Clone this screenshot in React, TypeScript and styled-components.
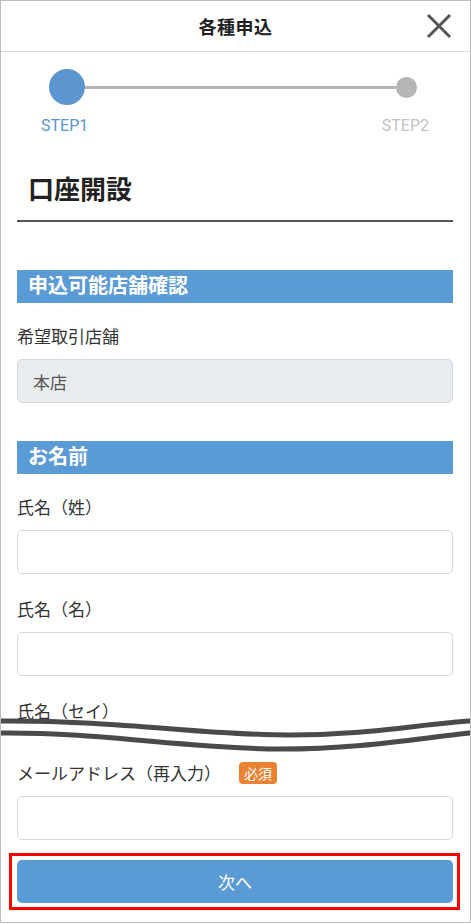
import React from 'react';
import styled, { createGlobalStyle } from 'styled-components';

const GlobalStyle = createGlobalStyle`
  html, body {
    margin: 0;
    padding: 0;
    background: #fff;
  }
  body {
    font-family: Roboto, "Noto Sans CJK JP", sans-serif;
    color: #333;
  }
  * {
    box-sizing: border-box;
  }
`;

const Frame = styled.div`
  width: 471px;
  height: 923px;
  border: 1px solid #bcbcbc;
  overflow: hidden;
  background: #fff;
`;

const Header = styled.header`
  display: grid;
  grid-template-columns: 1fr auto 1fr;
  align-items: center;
  height: 51px;
  border-bottom: 1px solid #dcdcdc;
`;

const HeaderTitle = styled.h1`
  grid-column: 2;
  margin: 0;
  font-size: 18px;
  font-weight: 700;
  color: #222;
  letter-spacing: 0.5px;
`;

const CloseButton = styled.button`
  justify-self: end;
  display: flex;
  align-items: center;
  justify-content: center;
  width: 28px;
  height: 28px;
  margin-right: 17px;
  padding: 0;
  border: 0;
  background: none;
  cursor: pointer;
`;

const Stepper = styled.div`
  padding-top: 17px;
`;

const StepTrack = styled.div`
  display: flex;
  align-items: center;
  padding: 0 53px 0 48px;
`;

const Dot = styled.span<{ $active?: boolean }>`
  flex: none;
  width: ${(p) => (p.$active ? 36 : 21)}px;
  height: ${(p) => (p.$active ? 36 : 21)}px;
  border-radius: 50%;
  background: ${(p) => (p.$active ? '#5b96d0' : '#b5b5b5')};
`;

const StepLine = styled.span`
  flex: 1;
  height: 3px;
  background: #b5b5b5;
`;

const StepLabels = styled.div`
  display: flex;
  justify-content: space-between;
  padding: 0 41px 0 40px;
  margin-top: 11px;
`;

const StepLabel = styled.span<{ $active?: boolean }>`
  font-family: Roboto, "Noto Sans CJK JP", sans-serif;
  font-size: 16px;
  font-weight: 400;
  line-height: 20px;
  color: ${(p) => (p.$active ? '#5b96d0' : '#c2c2c2')};
`;

const Content = styled.main`
  padding: 0 17px 0 16px;
`;

const PageTitle = styled.h2`
  margin: 36px 0 0;
  padding: 0 11px 12px;
  font-size: 26px;
  font-weight: 700;
  line-height: 36px;
  color: #222;
  border-bottom: 2px solid #555;
`;

const Section = styled.section<{ $first?: boolean }>`
  margin-top: ${(p) => (p.$first ? 48 : 38)}px;
`;

const SectionHeading = styled.h3`
  margin: 0 0 21px;
  padding: 0 11px;
  height: 33px;
  font-size: 20px;
  font-weight: 700;
  line-height: 33px;
  color: #fff;
  background: #5b9bd5;
`;

const Field = styled.div<{ $last?: boolean }>`
  margin-bottom: ${(p) => (p.$last ? 0 : 23)}px;
`;

const LabelRow = styled.div`
  display: flex;
  align-items: center;
  gap: 18px;
  margin-bottom: 11px;
`;

const Label = styled.label`
  font-family: "Noto Sans CJK JP", sans-serif;
  font-size: 17px;
  line-height: 24px;
  color: #333;
`;

const RequiredBadge = styled.span`
  display: inline-block;
  height: 22px;
  padding: 0 5px;
  border-radius: 4px;
  background: #eb8233;
  color: #fff;
  font-family: "Noto Sans CJK JP", sans-serif;
  font-size: 14px;
  line-height: 22px;
`;

const Input = styled.input`
  display: block;
  width: 100%;
  height: 44px;
  padding: 0 15px;
  border: 1px solid #d3d9e0;
  border-radius: 5px;
  font-family: "Noto Sans CJK JP", sans-serif;
  font-size: 17px;
  color: #555;
  background: #fff;

  &:disabled {
    background: #e9ecef;
    color: #555;
    -webkit-text-fill-color: #555;
    opacity: 1;
  }
`;

const WaveBreak = styled.div`
  height: 45px;
  margin: -18px -17px 0 -17px;
  position: relative;

  svg {
    display: block;
  }
`;

const Highlight = styled.div`
  margin: 13px -7px 0 -8px;
  padding: 4px 4px 4px 5px;
  border: 3px solid #f00;
`;

const NextButton = styled.button`
  display: block;
  width: 100%;
  height: 43px;
  border: 0;
  border-radius: 5px;
  background: #5b9bd5;
  color: #fff;
  font-family: "Noto Sans CJK JP", sans-serif;
  font-size: 17px;
  cursor: pointer;
`;

const CloseIcon = () => (
  <svg width="26" height="26" viewBox="0 0 26 26">
    <path d="M2 2 L24 24 M24 2 L2 24" stroke="#555" strokeWidth="3" strokeLinecap="butt" />
  </svg>
);

const upper = 'M0 5 C120 4, 200 19, 290 19 C370 19, 420 8, 471 5';
const lowerBack = 'L471 17 C420 22, 360 33, 280 33 C190 33, 100 16, 0 17 Z';
const lower = 'M0 17 C100 16, 190 33, 280 33 C360 33, 420 22, 471 17';

const Wave = () => (
  <svg width="471" height="45" viewBox="0 0 471 45">
    <path d={upper + ' ' + lowerBack} fill="#fff" />
    <path d={upper} fill="none" stroke="#4a4a4a" strokeWidth="5" />
    <path d={lower} fill="none" stroke="#4a4a4a" strokeWidth="5" />
  </svg>
);

export default function App() {
  return (
    <>
      <GlobalStyle />
      <Frame>
        <Header>
          <HeaderTitle>各種申込</HeaderTitle>
          <CloseButton aria-label="閉じる">
            <CloseIcon />
          </CloseButton>
        </Header>

        <Stepper>
          <StepTrack>
            <Dot $active />
            <StepLine />
            <Dot />
          </StepTrack>
          <StepLabels>
            <StepLabel $active>STEP1</StepLabel>
            <StepLabel>STEP2</StepLabel>
          </StepLabels>
        </Stepper>

        <Content>
          <PageTitle>口座開設</PageTitle>

          <Section $first>
            <SectionHeading>申込可能店舗確認</SectionHeading>
            <Field>
              <LabelRow>
                <Label>希望取引店舗</Label>
              </LabelRow>
              <Input value="本店" disabled readOnly />
            </Field>
          </Section>

          <Section>
            <SectionHeading>お名前</SectionHeading>
            <Field>
              <LabelRow>
                <Label>氏名（姓）</Label>
              </LabelRow>
              <Input />
            </Field>
            <Field>
              <LabelRow>
                <Label>氏名（名）</Label>
              </LabelRow>
              <Input />
            </Field>
            <Field $last>
              <LabelRow>
                <Label>氏名（セイ）</Label>
              </LabelRow>
            </Field>
            <WaveBreak>
              <Wave />
            </WaveBreak>
            <Field $last>
              <LabelRow>
                <Label>メールアドレス（再入力）</Label>
                <RequiredBadge>必須</RequiredBadge>
              </LabelRow>
              <Input />
            </Field>
          </Section>

          <Highlight>
            <NextButton>次へ</NextButton>
          </Highlight>
        </Content>
      </Frame>
    </>
  );
}
